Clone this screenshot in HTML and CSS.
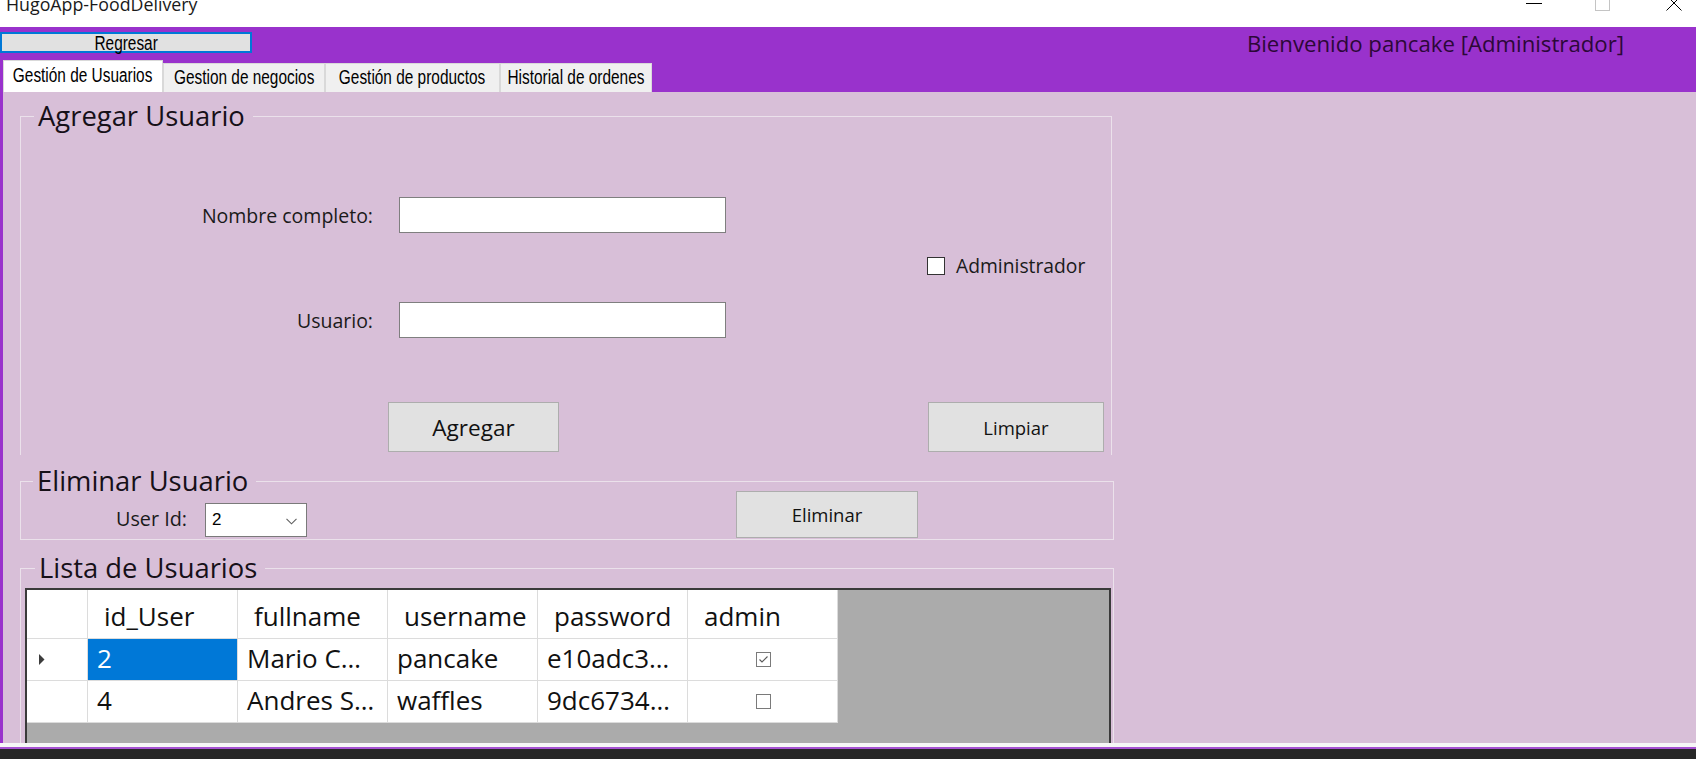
FILE: index.html
```html
<!DOCTYPE html>
<html lang="es">
<head>
<meta charset="utf-8">
<title>HugoApp-FoodDelivery</title>
<link rel="stylesheet" href="styles.css">
</head>
<body>
<div class="titlebar">
  <div class="title">HugoApp-FoodDelivery</div>
  <div class="winctl">
    <svg class="wc wc-min" width="16" height="27" viewBox="0 0 16 27"><line x1="0" y1="3.5" x2="16" y2="3.5" stroke="#000" stroke-width="1"/></svg>
    <svg class="wc wc-max" width="16" height="27" viewBox="0 0 16 27"><rect x="0.5" y="-4" width="14" height="14.5" fill="none" stroke="#c4c4c4" stroke-width="1"/></svg>
    <svg class="wc wc-close" width="16" height="27" viewBox="0 0 16 27"><line x1="0.5" y1="-4.5" x2="15.5" y2="10.5" stroke="#000" stroke-width="1"/><line x1="15.5" y1="-4.5" x2="0.5" y2="10.5" stroke="#000" stroke-width="1"/></svg>
  </div>
</div>

<div class="header">
  <div class="toprow">
    <button class="back-btn"><span class="cond">Regresar</span></button>
    <div class="welcome">Bienvenido pancake [Administrador]</div>
  </div>
  <div class="tabs">
    <div class="tab active t1"><span class="cond">Gestión de Usuarios</span></div>
    <div class="tab t2"><span class="cond">Gestion de negocios</span></div>
    <div class="tab t3"><span class="cond">Gestión de productos</span></div>
    <div class="tab t4"><span class="cond">Historial de ordenes</span></div>
  </div>
</div>

<div class="content-wrap">
  <div class="content">
    <fieldset class="group g-add">
      <legend>Agregar Usuario</legend>
      <div class="frow row-a">
        <label class="flabel">Nombre completo:</label>
        <div class="tbox"></div>
      </div>
      <div class="frow row-chk">
        <span class="chkbox"></span>
        <span class="chklabel">Administrador</span>
      </div>
      <div class="frow row-b">
        <label class="flabel">Usuario:</label>
        <div class="tbox"></div>
      </div>
      <div class="frow row-btn">
        <button class="wbtn btn-agregar">Agregar</button>
        <button class="wbtn btn-limpiar">Limpiar</button>
      </div>
    </fieldset>

    <fieldset class="group g-del">
      <legend>Eliminar Usuario</legend>
      <div class="frow row-del">
        <label class="idlabel">User Id:</label>
        <div class="combo">
          <span class="combo-val">2</span>
          <svg class="chev" width="11" height="7" viewBox="0 0 11 7"><polyline points="0.5,0.8 5.5,5.8 10.5,0.8" fill="none" stroke="#606060" stroke-width="1.1"/></svg>
        </div>
        <button class="wbtn btn-eliminar">Eliminar</button>
      </div>
    </fieldset>

    <fieldset class="group g-list">
      <legend>Lista de Usuarios</legend>
      <div class="dgv">
        <div class="dgv-grid">
          <div class="c rh hd"></div>
          <div class="c hd">id_User</div>
          <div class="c hd">fullname</div>
          <div class="c hd">username</div>
          <div class="c hd">password</div>
          <div class="c hd">admin</div>

          <div class="c rh"><svg width="6" height="11" viewBox="0 0 6 11"><polygon points="0,0 5.5,5.5 0,11" fill="#3c3c3c"/></svg></div>
          <div class="c sel">2</div>
          <div class="c">Mario C…</div>
          <div class="c">pancake</div>
          <div class="c">e10adc3…</div>
          <div class="c cb"><svg width="15" height="15" viewBox="0 0 15 15"><rect x="0.5" y="0.5" width="14" height="14" fill="#fff" stroke="#7a7a7a"/><polyline points="3.5,7.5 6,10 11.5,4.5" fill="none" stroke="#5a5a5a" stroke-width="1.1"/></svg></div>

          <div class="c rh"></div>
          <div class="c">4</div>
          <div class="c">Andres S…</div>
          <div class="c">waffles</div>
          <div class="c">9dc6734…</div>
          <div class="c cb"><svg width="15" height="15" viewBox="0 0 15 15"><rect x="0.5" y="0.5" width="14" height="14" fill="#fff" stroke="#7a7a7a"/></svg></div>
        </div>
      </div>
    </fieldset>
  </div>
</div>
<div class="bottom-white"></div>
<div class="bottom-purple"></div>
<div class="taskbar"></div>
</body>
</html>
```

FILE: styles.css
```css
* { box-sizing: border-box; }
html, body { margin: 0; padding: 0; }
body {
  width: 1696px;
  height: 759px;
  overflow: hidden;
  background: #fff;
  font-family: "Open Sans", "Noto Sans", sans-serif;
  color: #111;
}

/* title bar */
.titlebar {
  height: 27px;
  background: #fff;
  display: flex;
  justify-content: space-between;
  overflow: hidden;
}
.title {
  margin: -5px 0 0 6px;
  font-size: 17.8px;
  line-height: 18px;
  color: #1a1a1a;
  white-space: nowrap;
}
.winctl { display: flex; margin-right: 14px; }
.wc { display: block; overflow: visible; }
.wc-max { margin-left: 53px; }
.wc-close { margin-left: 55px; }

/* header */
.header {
  height: 65px;
  background: #9932cc;
  display: flex;
  flex-direction: column;
}
.toprow {
  height: 33px;
  display: flex;
  justify-content: space-between;
  align-items: flex-start;
}
.cond {
  display: inline-block;
  font-family: "Liberation Sans", Arial, sans-serif;
  font-size: 20px;
  line-height: 20px;
  white-space: nowrap;
  transform: scaleX(0.77);
  color: #000;
}
.back-btn {
  margin: 5px 0 0 0;
  width: 252px;
  height: 21px;
  padding: 0;
  border: 2px solid #0078d7;
  background: #e1e1e1;
  display: flex;
  align-items: center;
  justify-content: center;
}
.welcome {
  margin: 2px 72px 0 0;
  font-size: 22.2px;
  line-height: 30px;
  color: #2c0838;
  white-space: nowrap;
}
.tabs {
  height: 32px;
  display: flex;
  align-items: flex-end;
  padding-left: 3px;
}
.tab {
  height: 29px;
  padding-bottom: 3px;
  border: 1px solid #d9d9d9;
  border-bottom: none;
  background: #f0f0f0;
  display: flex;
  align-items: center;
  justify-content: center;
}
.tab.active {
  height: 32px;
  padding-bottom: 4px;
  background: #fff;
}
.t1 { width: 160px; }
.t2 { width: 162px; }
.t3 { width: 175px; }
.t4 { width: 152px; }

/* content */
.content-wrap {
  height: 651px;
  background: #9932cc;
  padding-left: 3px;
  display: flex;
}
.content {
  flex: 1;
  background: #d8bfd8;
  overflow: hidden;
}
.bottom-white { height: 4px; background: #f6f6f6; }
.bottom-purple { height: 2px; background: #a652d2; }
.taskbar { height: 10px; background: #272727; }

/* group boxes */
.group {
  margin: 0 0 0 17px;
  padding: 0;
  border: 1px solid #ebe1eb;
  min-width: 0;
}
.group legend {
  font-size: 27.4px;
  line-height: 20px;
  padding: 0 8px 0 4px;
  margin-left: 13px;
  color: #161018;
  white-space: nowrap;
}
.g-del legend { margin-left: 12px; }
.g-list legend { margin-left: 14px; }
.g-add {
  margin-top: 14px;
  width: 1092px;
  border-bottom: none;
  padding-bottom: 3px;
}
.g-del {
  margin-top: 16px;
  width: 1094px;
  padding-bottom: 1px;
}
.g-list {
  margin-top: 18px;
  width: 1094px;
  border-bottom: none;
}

.frow { display: flex; align-items: center; }
.flabel {
  width: 352px;
  text-align: right;
  font-size: 19.5px;
  color: #1a1a1a;
}
.tbox {
  margin-left: 26px;
  width: 327px;
  height: 36px;
  background: #fff;
  border: 1px solid #7f7f7f;
}
.row-a { margin-top: 71px; }
.row-chk { margin-top: 24px; height: 18px; padding-left: 906px; }
.chkbox {
  width: 18px;
  height: 18px;
  background: #fff;
  border: 1px solid #333;
}
.chklabel {
  margin-left: 11px;
  font-size: 19.3px;
  line-height: 20px;
  color: #1a1a1a;
}
.row-b { margin-top: 27px; }
.row-btn { margin-top: 64px; align-items: flex-start; }

.wbtn {
  font-family: "Open Sans", "Noto Sans", sans-serif;
  background: #e1e1e1;
  border: 1px solid #adadad;
  color: #111;
  padding: 0;
}
.btn-agregar {
  margin-left: 367px;
  width: 171px;
  height: 50px;
  font-size: 22.6px;
}
.btn-limpiar {
  margin-left: 369px;
  width: 176px;
  height: 50px;
  font-size: 18.5px;
}
.row-del { align-items: flex-start; height: 47px; }
.idlabel {
  margin: 14px 0 0 95px;
  width: 71px;
  font-size: 19.8px;
  line-height: 28px;
  color: #1a1a1a;
  white-space: nowrap;
}
.combo {
  margin: 12px 0 0 18px;
  width: 102px;
  height: 34px;
  background: #fff;
  border: 1px solid #7a7a7a;
  display: flex;
  align-items: center;
  justify-content: space-between;
  padding: 0 9px 0 6px;
}
.combo-val {
  font-family: "Liberation Sans", Arial, sans-serif;
  font-size: 17px;
  color: #000;
}
.chev { display: block; margin-top: 2px; }
.btn-eliminar {
  margin-left: 429px;
  width: 182px;
  height: 47px;
  font-size: 18.5px;
}

/* data grid */
.dgv {
  margin: 10px 0 0 4px;
  width: 1086px;
  height: 200px;
  border: 2px solid #3a3a3a;
  background: #ababab;
}
.dgv-grid {
  display: grid;
  grid-template-columns: 61px 150px 150px 150px 150px 150px;
  grid-template-rows: 49px 42px 42px;
  width: 811px;
  background: #fff;
}
.c {
  border-right: 1px solid #dcdcdc;
  border-bottom: 1px solid #dcdcdc;
  display: flex;
  align-items: center;
  padding: 0 0 3px 9px;
  font-size: 26px;
  line-height: 35px;
  color: #111;
  white-space: nowrap;
  overflow: hidden;
}
.c.hd { padding: 4px 0 0 16px; }
.c.rh { padding: 0 0 0 12px; }
.c.rh.hd { padding: 0; }
.c.sel { background: #0078d7; color: #fff; }
.c.cb { justify-content: center; padding: 0 0 0 2px; }
.c svg { display: block; }
```
